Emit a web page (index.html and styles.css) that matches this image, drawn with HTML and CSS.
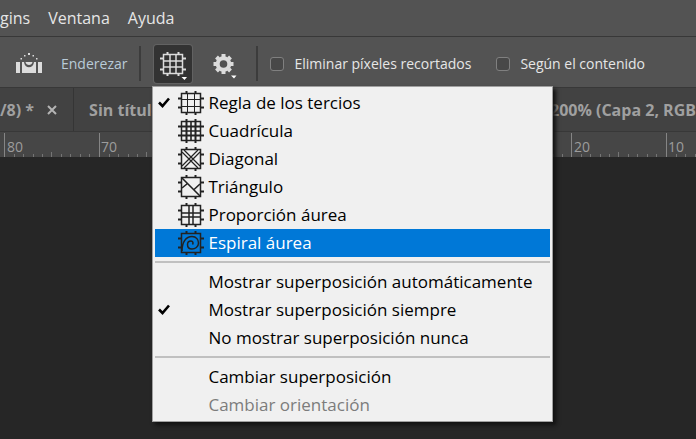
FILE: index.html
```html
<!DOCTYPE html>
<html lang="es">
<head>
<meta charset="utf-8">
<title>Recortar</title>
<link rel="stylesheet" href="styles.css">
</head>
<body>
<svg class="defs" aria-hidden="true">
  <defs>
    <g id="frame" fill="none" stroke="currentColor">
      <path d="M3.500 3.500H22.500V22.500H3.500Z" stroke-width="1.500"/>
      <path d="M8.500 1V4M17.500 1V4M8.500 22V25M17.500 22V25M0 8.500H4M0 17.500H4M22 8.500H26M22 17.500H26" stroke-width="2"/>
    </g>
    <g id="ticks">
      <path d="M0.5 1V25" stroke="#858585"/>
      <path d="M10.5 22V25M19.5 22V25M29.5 22V25M38.5 22V25M47.5 20V25M57.5 22V25M66.5 22V25M76.5 22V25M85.5 22V25" stroke="#757575"/>
    </g>
    <path id="check" d="M1 5.5L4.500 9L11 1.500" fill="none" stroke="#000" stroke-width="2.600"/>
  </defs>
</svg>
<div class="app">
  <nav class="menubar">
    <a href="#">gins</a>
    <a href="#">Ventana</a>
    <a href="#">Ayuda</a>
  </nav>
  <div class="options">
    <button class="straighten" type="button">
      <svg width="26" height="22" viewBox="0 0 26 22" fill="#dcdcdc">
        <path d="M0 9H4V20H0ZM22 9H26V20H22ZM6 9H8C8.500 16 17.500 16 18 9H20V20H6Z"/>
        <path d="M9.500 9C10 13 16 13 16.500 9Z"/>
        <path d="M12 0h2v2h-2zM8 2h1.500v1.500h-1.500zM16.500 2h1.500v1.500h-1.500zM4.500 5h1.500v1.500h-1.500zM20 5h1.500v1.500h-1.500z"/>
      </svg>
      <span>Enderezar</span>
    </button>
    <span class="divider"></span>
    <div class="anchor">
      <button class="tool active" type="button" aria-label="Superposición" aria-expanded="true">
        <svg width="38" height="38" viewBox="0 0 38 38">
          <g stroke="#dcdcdc" fill="none">
            <path d="M9.500 9.500H28.500V28.500H9.500ZM16 9V29M22 9V29M9 16H29M9 22H29" stroke-width="1.500"/>
            <path d="M13.500 7V10M24.500 7V10M13.500 28V31M24.500 28V31M6 13.500H10M6 24.500H10M28 13.500H32M28 24.500H32" stroke-width="2"/>
          </g>
          <path d="M27.500 32H33L30.500 35Z" fill="#fff"/>
        </svg>
      </button>
      <div class="menu" role="menu">
        <div class="group">
          <button class="item" role="menuitem" type="button">
            <svg class="mark" width="12" height="11"><use href="#check"/></svg>
            <svg class="icon" viewBox="0 0 26 26"><use href="#frame"/><path d="M9.500 4V22M16.500 4V22M4 9.500H22M4 16.500H22" stroke="currentColor" stroke-width="1"/></svg>
            <span>Regla de los tercios</span>
          </button>
          <button class="item" role="menuitem" type="button">
            <svg class="icon" viewBox="0 0 26 26"><use href="#frame"/><path d="M8.500 4V22M17.500 4V22M4 8.500H22M4 17.500H22" stroke="currentColor" stroke-width="2"/><path d="M13 4V22M4 13H22" stroke="currentColor" stroke-width="1.600"/></svg>
            <span>Cuadrícula</span>
          </button>
          <button class="item" role="menuitem" type="button">
            <svg class="icon" viewBox="0 0 26 26"><use href="#frame"/><path d="M4 6L20 22M6 4L22 20M4 20L20 4M6 22L22 6" stroke="currentColor" stroke-width="1.200" fill="none"/></svg>
            <span>Diagonal</span>
          </button>
          <button class="item" role="menuitem" type="button">
            <svg class="icon" viewBox="0 0 26 26"><use href="#frame"/><path d="M4 4L22 22M4 14L9.500 9.500M15.500 16L22 10" stroke="currentColor" stroke-width="1.600"/></svg>
            <span>Triángulo</span>
          </button>
          <button class="item" role="menuitem" type="button">
            <svg class="icon" viewBox="0 0 26 26"><use href="#frame"/><path d="M11 4V22M15 4V22M4 11H22M4 15H22" stroke="currentColor" stroke-width="1.500"/></svg>
            <span>Proporción áurea</span>
          </button>
          <button class="item selected" role="menuitem" type="button">
            <svg class="icon" viewBox="0 0 26 26"><use href="#frame"/><path d="M4 21C4 12 8 6.500 14 6.500C18.500 6.500 20.500 10 20.500 13C20.500 17 17 19 14 19C11 19 9.500 17 9.500 14.500C9.500 12 11 11 13 11C15 11 15.500 13 14.500 14.500" fill="none" stroke="currentColor" stroke-width="1.500"/></svg>
            <span>Espiral áurea</span>
          </button>
        </div>
        <div class="group">
          <button class="item" role="menuitem" type="button"><span>Mostrar superposición automáticamente</span></button>
          <button class="item" role="menuitem" type="button">
            <svg class="mark" width="12" height="11"><use href="#check"/></svg>
            <span>Mostrar superposición siempre</span>
          </button>
          <button class="item" role="menuitem" type="button"><span>No mostrar superposición nunca</span></button>
        </div>
        <div class="group">
          <button class="item" role="menuitem" type="button"><span>Cambiar superposición</span></button>
          <button class="item" role="menuitem" type="button" disabled><span>Cambiar orientación</span></button>
        </div>
      </div>
    </div>
    <button class="tool gear" type="button" aria-label="Opciones de recorte">
      <svg width="38" height="38" viewBox="0 0 38 38">
        <g transform="translate(17.500 19)">
          <circle r="5.800" fill="none" stroke="#dcdcdc" stroke-width="4"/>
          <path d="M0 -10V-7M0 7V10M-10 0H-7M7 0H10M-7 -7L-5 -5M5 5L7 7M-7 7L-5 5M5 -5L7 -7" stroke="#dcdcdc" stroke-width="4"/>
        </g>
        <path d="M25 30.500H30.500L28 33.500Z" fill="#fff"/>
      </svg>
    </button>
    <span class="divider"></span>
    <label class="option"><input type="checkbox"><span>Eliminar píxeles recortados</span></label>
    <label class="option"><input type="checkbox"><span>Según el contenido</span></label>
  </div>
  <div class="tabs">
    <div class="tab first">
      <span>/8) *</span>
      <button class="close" type="button" aria-label="Cerrar">
        <svg width="12" height="12" viewBox="0 0 12 12"><path d="M2 2L10 10M10 2L2 10" stroke="#b4b4b4" stroke-width="2"/></svg>
      </button>
    </div>
    <div class="tab"><span>Sin título</span></div>
    <div class="tab last"><span>200% (Capa 2, RGB</span></div>
  </div>
  <svg class="ruler" height="25">
    <use href="#ticks" x="-91"/><use href="#ticks" x="4"/><use href="#ticks" x="99"/><use href="#ticks" x="193"/><use href="#ticks" x="288"/><use href="#ticks" x="382"/><use href="#ticks" x="477"/><use href="#ticks" x="571"/><use href="#ticks" x="666"/>
    <g fill="#9c9c9c">
      <text x="7" y="20">80</text><text x="101" y="20">70</text><text x="574" y="20">20</text><text x="668" y="20">10</text>
    </g>
  </svg>
  <main class="canvas"></main>
</div>
</body>
</html>
```
FILE: styles.css
```css
* { box-sizing: border-box; }
body {
  margin: 0;
  background: #262626;
  font-family: "Open Sans", "Noto Sans", sans-serif;
  font-size: 16px;
  color: #e6e6e6;
  overflow: hidden;
}
button {
  border: 0;
  padding: 0;
  background: none;
  font: inherit;
  color: inherit;
}
svg { display: block; flex: none; }
.defs { position: absolute; width: 0; height: 0; }
.app { display: flex; flex-direction: column; min-height: 100vh; }
.menubar {
  display: flex;
  align-items: center;
  gap: 18px;
  height: 36px;
  background: #535353;
}
.menubar a { color: inherit; text-decoration: none; }
.options {
  display: flex;
  align-items: center;
  height: 52px;
  padding: 3px 0 0 16px;
  background: #535353;
  border-top: 1px solid #383838;
  border-bottom: 1px solid #383838;
  font-size: 14px;
  white-space: nowrap;
}
.straighten { display: flex; align-items: center; gap: 19px; color: #b9cbd8; }
.divider { width: 2px; height: 35px; background: #3c3c3c; }
.straighten + .divider { margin: 0 13px 0 12px; }
.anchor { position: relative; }
.tool { display: block; width: 38px; height: 38px; }
.active { background: #333; border-radius: 3px; box-shadow: 0 0 0 1px #626262; }
.gear { margin: 0 12px 0 14px; }
.option { display: flex; align-items: center; gap: 10px; margin-left: 12px; }
.option + .option { margin-left: 25px; }
.option input {
  appearance: none;
  width: 14px;
  height: 14px;
  margin: 0;
  border: 1px solid #808080;
  border-radius: 3px;
  background: #484848;
}
.tabs {
  display: flex;
  height: 44px;
  background: #424242;
  border-bottom: 1px solid #383838;
  color: #a0a0a0;
  font-weight: 700;
  white-space: nowrap;
}
.tab { display: flex; align-items: center; padding-left: 15px; }
.first { padding: 0 15px 0 0; gap: 12px; border-right: 1px solid #353535; }
.last { margin-left: auto; }
.ruler { width: 100%; background: #464646; font-size: 14px; }
.canvas { flex: 1; background: #262626; }
.menu {
  position: absolute;
  z-index: 1;
  top: 41px;
  left: -2px;
  width: 401px;
  padding: 2px;
  background: #f0f0f0;
  border: 1px solid #a0a0a0;
  box-shadow: 3px 3px 4px #111;
  color: #000;
  font-size: 17px;
}
.group + .group { border-top: 2px solid #c0c0c0; margin-top: 4px; padding-top: 5px; }
.item {
  position: relative;
  display: flex;
  align-items: center;
  width: 100%;
  height: 28px;
  padding-left: 53px;
  text-align: left;
}
.item:disabled { color: #7c7c7c; }
.selected { background: #0078d7; }
.selected span { color: #fff; }
.mark { position: absolute; left: 3px; top: 8px; }
.icon { width: 26px; height: 26px; margin: 0 4px 0 -30px; color: #222; }
```
